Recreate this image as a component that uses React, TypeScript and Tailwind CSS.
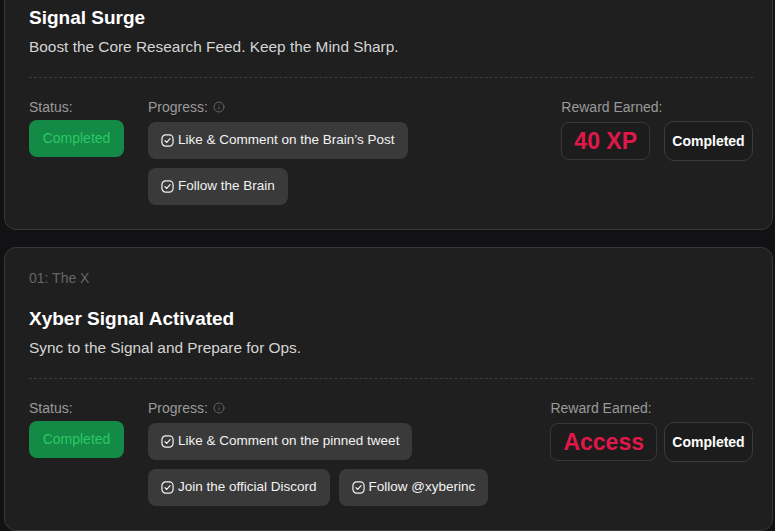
import { Info } from 'lucide-react';

type Quest = {
    tag?: string;
    title: string;
    subtitle: string;
    tasks: string[][];
    reward: string;
    rewardGap: string;
};

const quests: Quest[] = [
    {
        title: "Signal Surge",
        subtitle: "Boost the Core Research Feed. Keep the Mind Sharp.",
        tasks: [["Like & Comment on the Brain’s Post"], ["Follow the Brain"]],
        reward: "40 XP",
        rewardGap: "gap-[14px]",
    },
    {
        tag: "01: The X",
        title: "Xyber Signal Activated",
        subtitle: "Sync to the Signal and Prepare for Ops.",
        tasks: [["Like & Comment on the pinned tweet"], ["Join the official Discord", "Follow @xyberinc"]],
        reward: "Access",
        rewardGap: "gap-[7px]",
    },
];

function CheckBox() {
    return (
        <svg width="13" height="13" viewBox="0 0 14 14" fill="none" stroke="currentColor" strokeWidth="1.3" strokeLinecap="round" strokeLinejoin="round">
            <rect x="1" y="1" width="12" height="12" rx="4" />
            <path d="M4.3 7.2 L6.2 9.1 L9.8 5" />
        </svg>
    );
}

function TaskChip({ label }: { label: string }) {
    return (
        <div className="flex items-center gap-[4px] h-[37px] px-[13px] rounded-lg bg-[#3a3a3a] text-[13.5px] text-[#f2f2f2]">
            <CheckBox />
            <span>{label}</span>
        </div>
    );
}

function QuestCard({ quest }: { quest: Quest }) {
    return (
        <div className="w-[769px] rounded-xl border border-[#383838] bg-[#1f1f1f] pl-6 pr-[19px] pt-5 pb-6">
            {quest.tag && (
                <div className="text-[14px] leading-5 text-[#666] mb-[17px]">{quest.tag}</div>
            )}
            <h3 className="text-[19px] leading-[28px] font-bold text-white">{quest.title}</h3>
            <p className="mt-[3px] text-[15.4px] leading-6 text-[#d4d4d4]">{quest.subtitle}</p>

            <div className="mt-[18px] border-t border-dashed border-[#3c3c3c]" />

            <div className="mt-[19px] flex items-start justify-between">
                <div className="flex items-start gap-6">
                    <div className="flex flex-col">
                        <span className="text-[14px] leading-5 text-[#9a9a9a]">Status:</span>
                        <div className="mt-[3px] w-[95px] h-[37px] rounded-lg bg-[#138a45] flex items-center justify-center text-[14px] text-[#2bc866]">
                            Completed
                        </div>
                    </div>
                    <div className="flex flex-col">
                        <span className="flex items-center gap-[5px] text-[14px] leading-5 text-[#9a9a9a]">
                            Progress:
                            <Info size={12} strokeWidth={1.5} className="text-[#777]" />
                        </span>
                        <div className="mt-[5px] flex flex-col gap-[9px]">
                            {quest.tasks.map((row, i) => (
                                <div key={i} className="flex gap-[9px]">
                                    {row.map((t) => (
                                        <TaskChip key={t} label={t} />
                                    ))}
                                </div>
                            ))}
                        </div>
                    </div>
                </div>

                <div className="flex flex-col">
                    <span className="text-[14px] leading-5 text-[#9a9a9a]">Reward Earned:</span>
                    <div className={"mt-[4px] flex items-center " + quest.rewardGap}>
                        <div className="h-[38px] px-3 rounded-lg border border-[#383838] bg-[#1c1c1c] flex items-center text-[23px] font-bold text-[#e0184a]">
                            {quest.reward}
                        </div>
                        <div className="h-[40px] w-[89px] rounded-[10px] border border-[#3c3c3c] bg-[#1c1c1c] flex items-center justify-center text-[14px] font-bold text-white">
                            Completed
                        </div>
                    </div>
                </div>
            </div>
        </div>
    );
}

export default function App() {
    return (
        <div className="min-h-screen bg-[#121214] overflow-hidden" style={{ fontFamily: '"Liberation Sans", Arial, sans-serif' }}>
            <div className="-mt-[17px] pl-1 flex flex-col gap-[17px]">
                {quests.map((q) => (
                    <QuestCard key={q.title} quest={q} />
                ))}
            </div>
        </div>
    );
}
